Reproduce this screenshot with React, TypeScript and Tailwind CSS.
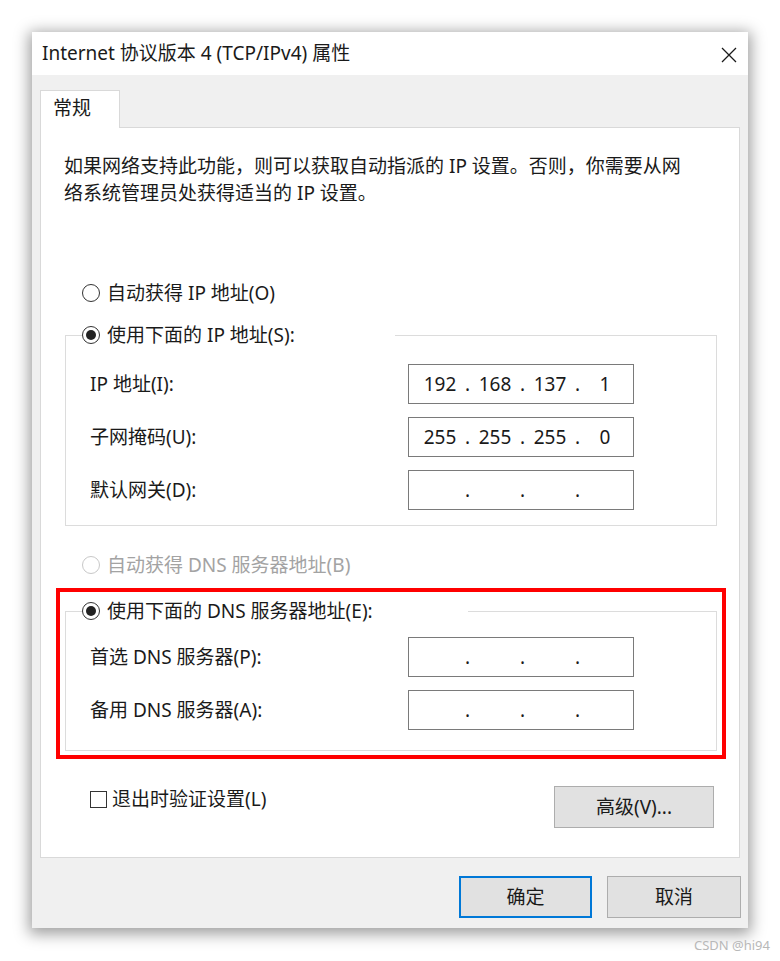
import React from "react";

const FONT = '"Noto Sans", "Noto Sans CJK SC", sans-serif';

function Radio({ checked, disabled }: { checked?: boolean; disabled?: boolean }) {
  return (
    <span
      className={
        "flex h-[18px] w-[18px] shrink-0 items-center justify-center rounded-full border bg-white " +
        (disabled ? "border-[#c8c8c8]" : "border-[#333333]")
      }
    >
      {checked && <span className="h-[10px] w-[10px] rounded-full bg-[#222222]" />}
    </span>
  );
}

function IpBox({ parts }: { parts: string[] }) {
  return (
    <div className="flex h-[40px] w-[226px] items-center border border-[#7a7a7a] bg-white pl-[9px] text-[19px] text-[#1a1a1a]">
      {[0, 1, 2, 3].map((i) => (
        <React.Fragment key={i}>
          <span className="w-[44px] text-center">{parts[i] ?? ""}</span>
          {i < 3 && <span className="w-[11px] text-center">.</span>}
        </React.Fragment>
      ))}
    </div>
  );
}

function Row({ label, parts }: { label: string; parts: string[] }) {
  return (
    <div className="flex items-center">
      <span className="w-[318px] text-[19px] text-[#1a1a1a]">{label}</span>
      <IpBox parts={parts} />
    </div>
  );
}

export default function App() {
  return (
    <div className="relative h-[961px] w-[780px] overflow-hidden bg-white" style={{ fontFamily: FONT }}>
      <div className="ml-[32px] pt-[32px]">
        <div className="flex h-[896px] w-[716px] flex-col bg-[#f0f0f0] shadow-[0_3px_14px_3px_rgba(0,0,0,0.38)]">
          {/* title bar */}
          <div className="flex h-[43px] items-center justify-between bg-white pl-[10px] pr-[11px]">
            <span className="text-[19px] text-[#1a1a1a]">Internet 协议版本 4 (TCP/IPv4) 属性</span>
            <svg width="16" height="16" viewBox="0 0 16 16" className="mt-[2px]">
              <path d="M1 1 L15 15 M15 1 L1 15" stroke="#1a1a1a" strokeWidth="1.3" />
            </svg>
          </div>

          {/* body */}
          <div className="flex flex-col px-[8px] pt-[15px]">
            {/* tab */}
            <div className="relative z-10 -mb-px flex h-[38px] w-[80px] items-start border border-b-0 border-[#d9d9d9] bg-white pl-[12px] pt-[3px]">
              <span className="text-[19px] text-[#1a1a1a]">常规</span>
            </div>
            {/* panel */}
            <div className="flex h-[731px] flex-col border border-[#d9d9d9] bg-white">
              <p className="ml-[23px] mt-[25px] whitespace-nowrap text-[19px] leading-[27px] text-[#1a1a1a]">
                如果网络支持此功能，则可以获取自动指派的 IP 设置。否则，你需要从网
                <br />
                络系统管理员处获得适当的 IP 设置。
              </p>

              <div className="ml-[41px] mt-[72px] flex h-[28px] items-center gap-[7px]">
                <Radio />
                <span className="text-[19px] text-[#1a1a1a]">自动获得 IP 地址(O)</span>
              </div>

              <fieldset className="ml-[24px] mt-[14px] w-[652px] border border-[#dcdcdc] px-0 pb-[15px]">
                <legend className="ml-[16px] flex h-[28px] w-[313px] items-center gap-[7px] bg-white p-0">
                  <Radio checked />
                  <span className="text-[19px] text-[#1a1a1a]">使用下面的 IP 地址(S):</span>
                </legend>
                <div className="flex flex-col gap-[13px] pl-[24px] pt-[15px]">
                  <Row label="IP 地址(I):" parts={["192", "168", "137", "1"]} />
                  <Row label="子网掩码(U):" parts={["255", "255", "255", "0"]} />
                  <Row label="默认网关(D):" parts={[]} />
                </div>
              </fieldset>

              <div className="ml-[41px] mt-[25px] flex h-[28px] items-center gap-[7px]">
                <Radio disabled />
                <span className="text-[19px] text-[#a3a3a3]">自动获得 DNS 服务器地址(B)</span>
              </div>

              <div className="ml-[15px] mt-[9px] w-[670px] border-[4px] border-[#ff0000] px-[5px] pb-[4px] pt-[5px]">
                <fieldset className="w-[652px] border border-[#dcdcdc] px-0 pb-[20px]">
                  <legend className="ml-[16px] flex h-[28px] w-[386px] items-center gap-[7px] bg-white p-0">
                    <Radio checked />
                    <span className="text-[19px] text-[#1a1a1a]">使用下面的 DNS 服务器地址(E):</span>
                  </legend>
                  <div className="flex flex-col gap-[13px] pl-[24px] pt-[12px]">
                    <Row label="首选 DNS 服务器(P):" parts={[]} />
                    <Row label="备用 DNS 服务器(A):" parts={[]} />
                  </div>
                </fieldset>
              </div>

              <div className="ml-[49px] mr-[25px] mt-[27px] flex items-start justify-between">
                <div className="flex h-[27px] items-center gap-[5px]">
                  <span className="h-[17px] w-[17px] border border-[#333333] bg-white" />
                  <span className="text-[19px] text-[#1a1a1a]">退出时验证设置(L)</span>
                </div>
                <div className="flex h-[42px] w-[160px] items-center justify-center border border-[#adadad] bg-[#e1e1e1] text-[19px] text-[#1a1a1a]">
                  高级(V)...
                </div>
              </div>
            </div>
          </div>

          {/* footer */}
          <div className="mt-[18px] flex justify-end gap-[15px] pr-[7px]">
            <div className="flex h-[42px] w-[133px] items-center justify-center border-2 border-[#0078d7] bg-[#e1e1e1] text-[19px] text-[#1a1a1a]">
              确定
            </div>
            <div className="flex h-[42px] w-[134px] items-center justify-center border border-[#adadad] bg-[#e1e1e1] text-[19px] text-[#1a1a1a]">
              取消
            </div>
          </div>
        </div>
      </div>
      <div className="absolute bottom-[6px] right-[10px] text-[13px] text-[#b8b8b8]">CSDN @hi94</div>
    </div>
  );
}
